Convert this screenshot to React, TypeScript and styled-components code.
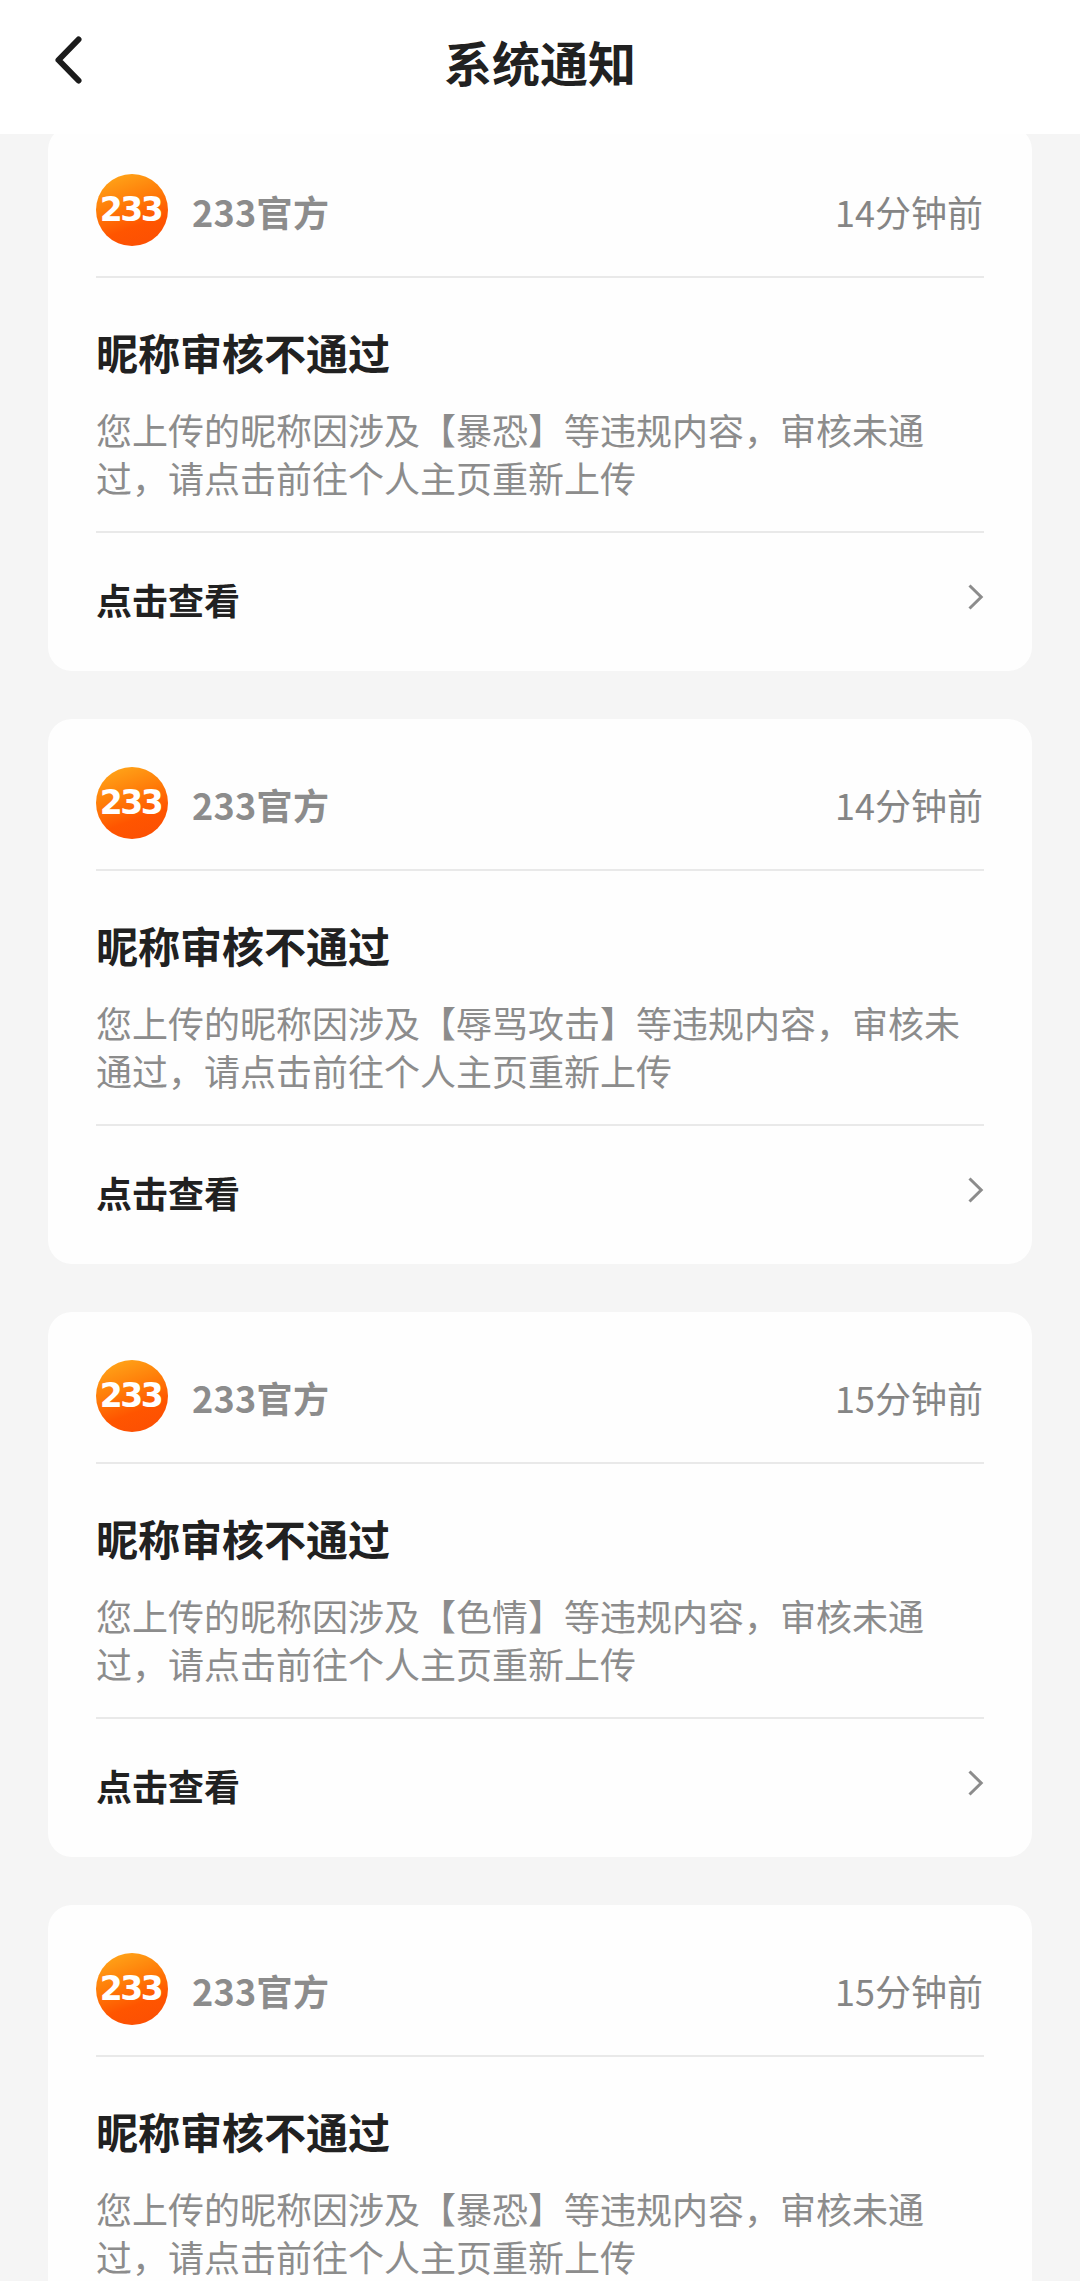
import React from "react";
import styled, { createGlobalStyle } from "styled-components";

const GlobalStyle = createGlobalStyle`
  * { box-sizing: border-box; }
  html, body { margin: 0; padding: 0; background: #f5f5f5; }
  body {
    font-family: "Noto Sans CJK SC", "Noto Sans", sans-serif;
    color: #212121;
    overflow: hidden;
  }
`;

const Screen = styled.div`
  display: flex;
  flex-direction: column;
  width: 1080px;
  height: 2281px;
  overflow: hidden;
  background: #f5f5f5;
`;

const Header = styled.header`
  display: grid;
  grid-template-columns: 96px 1fr 96px;
  flex: none;
  height: 134px;
  padding-bottom: 12px;
  align-items: center;
  background: #fff;
`;

const BackButton = styled.button`
  display: flex;
  justify-content: flex-end;
  width: 96px;
  padding: 0 12px 2px 0;
  border: 0;
  background: none;
`;

const PageTitle = styled.h1`
  margin: 0;
  text-align: center;
  font-size: 48px;
  line-height: 72px;
  font-weight: 700;
`;

const Viewport = styled.main`
  display: flex;
  flex-direction: column;
  flex: 1;
  min-height: 0;
  overflow: hidden;
`;

const List = styled.div`
  display: flex;
  flex-direction: column;
  gap: 48px;
  margin-top: -8px;
  padding: 0 48px;
`;

const Card = styled.article`
  flex: none;
  height: 545px;
  padding: 0 48px;
  border-radius: 24px;
  background: #fefefe;
`;

const Sender = styled.div`
  display: flex;
  align-items: center;
  height: 152px;
  padding: 48px 0 30px;
  border-bottom: 2px solid #e9e9e9;
`;

const Avatar = styled.div`
  display: flex;
  align-items: center;
  justify-content: center;
  width: 72px;
  height: 72px;
  padding-right: 3px;
  border-radius: 50%;
  background: linear-gradient(160deg, #ffa81a 4%, #ff7a08 42%, #ff5500 68%, #fb4e04 100%);
  color: #fff;
  font: 700 33px/72px "DejaVu Sans", sans-serif;
  letter-spacing: -2.5px;
`;

const SenderName = styled.span`
  flex: 1;
  margin-left: 24px;
  padding-top: 2px;
  font-size: 36px;
  line-height: 48px;
  font-weight: 700;
  letter-spacing: 0.3px;
  color: #8c8c8c;
`;

const Time = styled.time`
  padding: 2px 1px 0 0;
  font-size: 36px;
  line-height: 48px;
  color: #858585;
`;

const Body = styled.div`
  height: 255px;
  padding-top: 42px;
  border-bottom: 2px solid #e9e9e9;
`;

const Title = styled.h2`
  margin: 0 0 21px;
  font-size: 42px;
  line-height: 64px;
  font-weight: 700;
`;

const Message = styled.p`
  margin: 0;
  font-size: 36px;
  line-height: 48px;
  color: #8c8c8c;
`;

const Action = styled.div`
  display: flex;
  justify-content: space-between;
  align-items: center;
  height: 138px;
`;

const ActionLabel = styled.span`
  margin-bottom: 7px;
  font-size: 36px;
  line-height: 48px;
  font-weight: 700;
`;

const ActionArrow = styled.svg`
  margin-bottom: 11px;
`;

const notices = [
  { time: "14分钟前", reason: "暴恐" },
  { time: "14分钟前", reason: "辱骂攻击" },
  { time: "15分钟前", reason: "色情" },
  { time: "15分钟前", reason: "暴恐" },
];

function NoticeCard({ time, reason }: { time: string; reason: string }) {
  return (
    <Card>
      <Sender>
        <Avatar>233</Avatar>
        <SenderName>233官方</SenderName>
        <Time>{time}</Time>
      </Sender>
      <Body>
        <Title>昵称审核不通过</Title>
        <Message>{`您上传的昵称因涉及【${reason}】等违规内容，审核未通过，请点击前往个人主页重新上传`}</Message>
      </Body>
      <Action>
        <ActionLabel>点击查看</ActionLabel>
        <ActionArrow width="18" height="28" viewBox="0 0 18 28" fill="none">
          <path d="M3.500 2.500 15.200 14 3.500 25.500" stroke="#8c8c8c" strokeWidth="3" />
        </ActionArrow>
      </Action>
    </Card>
  );
}

export default function App() {
  return (
    <>
      <GlobalStyle />
      <Screen>
        <Header>
          <BackButton aria-label="返回">
            <svg width="30" height="50" viewBox="0 0 30 50" fill="none">
              <path d="M24.500 4.500 4.500 25l20 20.500" stroke="#1c1c1c" strokeWidth="6" strokeLinecap="round" strokeLinejoin="round" />
            </svg>
          </BackButton>
          <PageTitle>系统通知</PageTitle>
        </Header>
        <Viewport>
          <List>
            {notices.map((notice, index) => (
              <NoticeCard key={index} {...notice} />
            ))}
          </List>
        </Viewport>
      </Screen>
    </>
  );
}
